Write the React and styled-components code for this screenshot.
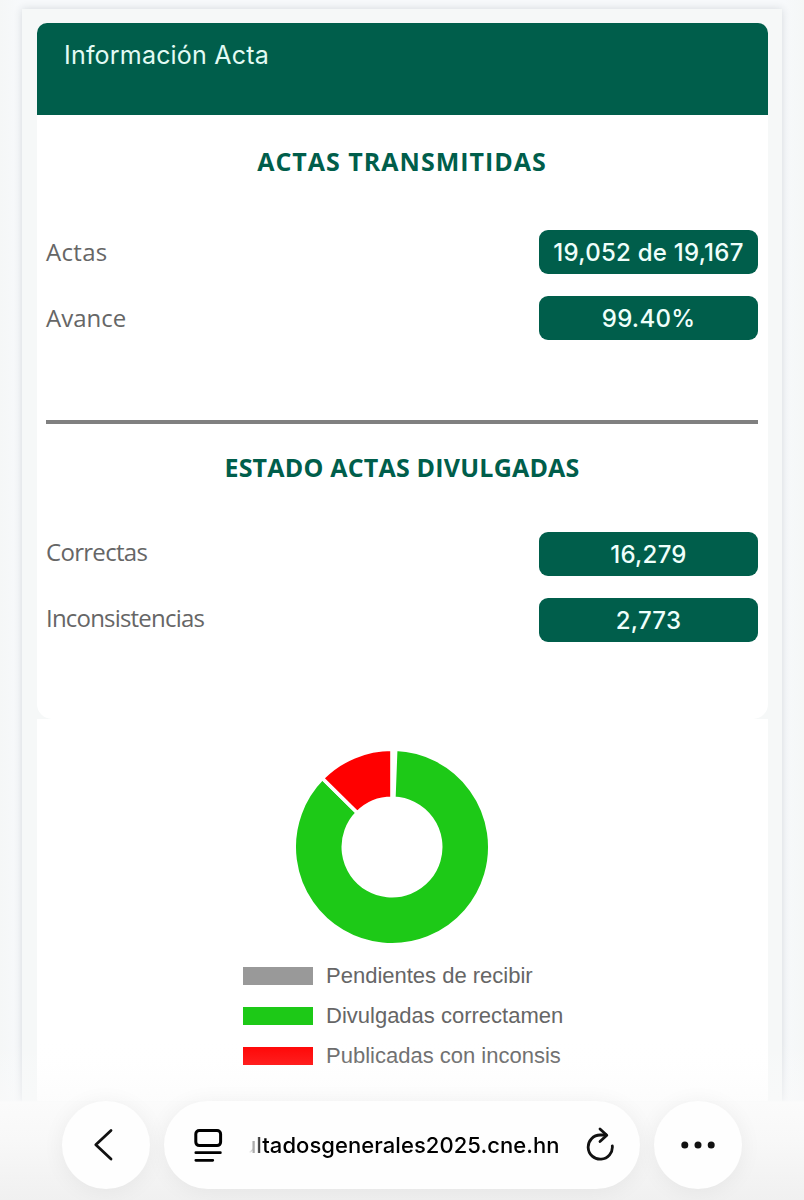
import React from "react";
import styled, { createGlobalStyle } from "styled-components";

const green = "#005e4b";

const GlobalStyle = createGlobalStyle`
  body {
    margin: 0;
    background: #f6f8f9;
  }

  * {
    box-sizing: border-box;
  }
`;

const Page = styled.div`
  position: relative;
  width: 804px;
  height: 1200px;
  padding: 9px 22px 0;
  overflow: hidden;
  background: linear-gradient(90deg, #f5f7f7 0, #f7f9fb 20px, #f7f9fb 784px, #f5f7f7 804px);
`;

const Panel = styled.main`
  height: 1093px;
  padding: 14px 14.5px 0;
  background: #f6f8f8;
  box-shadow: 0 0 8px rgba(40, 50, 60, 0.16);
`;

const Card = styled.section`
  height: 696px;
  background: #fff;
  border-radius: 10px 10px 15px 15px;
  overflow: hidden;
`;

const CardHead = styled.header`
  height: 91.5px;
  padding: 17px 27.5px;
  background: ${green};
  color: #e2fbf4;
  font: 400 25px/31px Inter, sans-serif;
  letter-spacing: 0.2px;
`;

const CardBody = styled.div`
  padding: 0 9.5px;
`;

const Title = styled.h2`
  margin: 0;
  padding-top: ${(props) => props.top};
  color: ${green};
  font: 700 25px/34px "Open Sans", sans-serif;
  letter-spacing: ${(props) => props.spacing};
  text-align: center;
`;

const Rows = styled.div`
  display: flex;
  flex-direction: column;
  gap: 22px;
  padding-top: ${(props) => props.top};
`;

const Row = styled.div`
  display: flex;
  justify-content: space-between;
  align-items: center;
  height: 44px;
`;

const Label = styled.span`
  padding-bottom: ${(props) => props.lift || "0"};
  color: #666;
  font: 400 24px/34px "Open Sans", sans-serif;
  letter-spacing: ${(props) => props.spacing || "0"};
`;

const Value = styled.span`
  width: 219px;
  height: 44px;
  border-radius: 9px;
  background: ${green};
  color: #effffb;
  font: 500 24px/46px Inter, sans-serif;
  letter-spacing: 0.25px;
  text-align: center;
`;

const Divider = styled.hr`
  height: 4px;
  margin: 80px 0 0;
  border: none;
  background: #808080;
`;

const ChartCard = styled.section`
  display: flex;
  flex-direction: column;
  align-items: center;
  height: 382px;
  padding: 30px 19.5px 0 0;
  background: #fff;
`;

const Legend = styled.ul`
  display: flex;
  flex-direction: column;
  gap: 14px;
  width: 319px;
  margin: 18px 0 0 20.5px;
  padding: 0;
  list-style: none;
`;

const LegendItem = styled.li`
  display: flex;
  align-items: center;
  gap: 13px;
  height: 26px;
  color: #666;
  font: 400 22px/26px "Liberation Sans", sans-serif;
  white-space: nowrap;
`;

const Swatch = styled.i`
  flex: none;
  width: 70px;
  height: 18px;
  background: ${(props) => props.color};
`;

const BottomBar = styled.nav`
  position: absolute;
  left: 0;
  right: 0;
  bottom: 0;
  display: flex;
  justify-content: center;
  gap: 14px;
  height: 160px;
  padding-top: 61px;
  background: linear-gradient(
    180deg,
    rgba(253, 253, 253, 0) 0,
    rgba(253, 253, 253, 0.12) 25px,
    rgba(250, 250, 250, 0.5) 60px,
    #fbfbfb 62px,
    #f8f8f8 100px,
    #f0f0f0 160px
  );
`;

const RoundButton = styled.button`
  display: flex;
  align-items: center;
  justify-content: center;
  width: 88px;
  height: 88px;
  padding: 0 ${(props) => props.shift || "0"} 0 0;
  border: none;
  border-radius: 50%;
  background: #fefefe;
  box-shadow: 0 2px 22px rgba(0, 0, 0, 0.06);
`;

const AddressBar = styled.div`
  display: flex;
  align-items: center;
  width: 476px;
  height: 88px;
  padding: 0 26.5px 0 29px;
  border-radius: 44px;
  background: #fefefe;
  box-shadow: 0 2px 22px rgba(0, 0, 0, 0.06);
`;

// keeps the domain visible and fades the start of the address
const Address = styled.span`
  display: flex;
  justify-content: flex-end;
  flex: 1;
  margin: 0 26px 0 26px;
  overflow: hidden;
  color: #000;
  font: 500 22px/30px Inter, sans-serif;
  letter-spacing: 0.06px;
  white-space: nowrap;
  mask-image: linear-gradient(90deg, transparent 0, #000 14px);
`;

const CX = 98;
const OUTER = 97.8;
const INNER = 48.7;

const point = (deg, r) => {
  const a = (deg * Math.PI) / 180;
  return `${CX + r * Math.sin(a)} ${CX - r * Math.cos(a)}`;
};

const arc = (from, to) => {
  const large = to - from > 180 ? 1 : 0;
  return `M${point(from, OUTER)} A${OUTER} ${OUTER} 0 ${large} 1 ${point(to, OUTER)} L${point(to, INNER)} A${INNER} ${INNER} 0 ${large} 0 ${point(from, INNER)}Z`;
};

const slices = [
  { label: "Pendientes de recibir", color: "#999", from: 0, to: 2.16 },
  { label: "Divulgadas correctamen", color: "#1dc917", from: 2.16, to: 314.6 },
  { label: "Publicadas con inconsis", color: "#ff0000", from: 314.6, to: 360 },
];

const Donut = () => (
  <svg width="196" height="196" viewBox="0 0 196 196">
    {slices.map((s) => (
      <path key={s.label} d={arc(s.from, s.to)} fill={s.color} stroke="#fff" strokeWidth="3.6" />
    ))}
  </svg>
);

const BackIcon = () => (
  <svg width="24" height="36" viewBox="0 0 24 36" fill="none" stroke="#111" strokeWidth="2.8" strokeLinecap="round" strokeLinejoin="round">
    <path d="M19 3.5 3.8 17.8 19 32" />
  </svg>
);

const ReaderIcon = () => (
  <svg width="30" height="36" viewBox="0 0 30 36" fill="none" stroke="#000" strokeWidth="3" strokeLinecap="round">
    <rect x="2.8" y="3.6" width="24.8" height="15" rx="3.5" />
    <path d="M2.8 25.7h24.6M2.8 33.3h17" strokeWidth="2.7" />
  </svg>
);

const ReloadIcon = () => (
  <svg width="28" height="36" viewBox="0 0 28 36" fill="none" stroke="#111" strokeWidth="2.8" strokeLinecap="round" strokeLinejoin="round">
    <path d="M26.3 18.8A12.1 12.1 0 1 1 14.2 8h5.8" />
    <path d="M14 2 20.8 8.2 14 14.6" />
  </svg>
);

const MoreIcon = () => (
  <svg width="36" height="8" viewBox="0 0 36 8" fill="#111">
    <circle cx="4.8" cy="4" r="3.5" />
    <circle cx="18" cy="4" r="3.5" />
    <circle cx="31.2" cy="4" r="3.5" />
  </svg>
);

const App = () => {
  return (
    <>
      <GlobalStyle />
      <Page>
        <Panel>
          <Card>
            <CardHead>Información Acta</CardHead>
            <CardBody>
              <Title top="29px" spacing="1px">ACTAS TRANSMITIDAS</Title>
              <Rows top="52px">
                <Row>
                  <Label spacing="0.3px">Actas</Label>
                  <Value>19,052 de 19,167</Value>
                </Row>
                <Row>
                  <Label>Avance</Label>
                  <Value>99.40%</Value>
                </Row>
              </Rows>
              <Divider />
              <Title top="26px" spacing="0.2px">ESTADO ACTAS DIVULGADAS</Title>
              <Rows top="48px">
                <Row>
                  <Label lift="3px" spacing="-0.7px">Correctas</Label>
                  <Value>16,279</Value>
                </Row>
                <Row>
                  <Label lift="3px" spacing="-0.8px">Inconsistencias</Label>
                  <Value>2,773</Value>
                </Row>
              </Rows>
            </CardBody>
          </Card>

          <ChartCard>
            <Donut />
            <Legend>
              {slices.map((s) => (
                <LegendItem key={s.label}>
                  <Swatch color={s.color} />
                  {s.label}
                </LegendItem>
              ))}
            </Legend>
          </ChartCard>
        </Panel>

        <BottomBar>
          <RoundButton shift="5px" aria-label="Atrás">
            <BackIcon />
          </RoundButton>
          <AddressBar>
            <ReaderIcon />
            <Address>resultadosgenerales2025.cne.hn</Address>
            <ReloadIcon />
          </AddressBar>
          <RoundButton aria-label="Más">
            <MoreIcon />
          </RoundButton>
        </BottomBar>
      </Page>
    </>
  );
};

export default App;
